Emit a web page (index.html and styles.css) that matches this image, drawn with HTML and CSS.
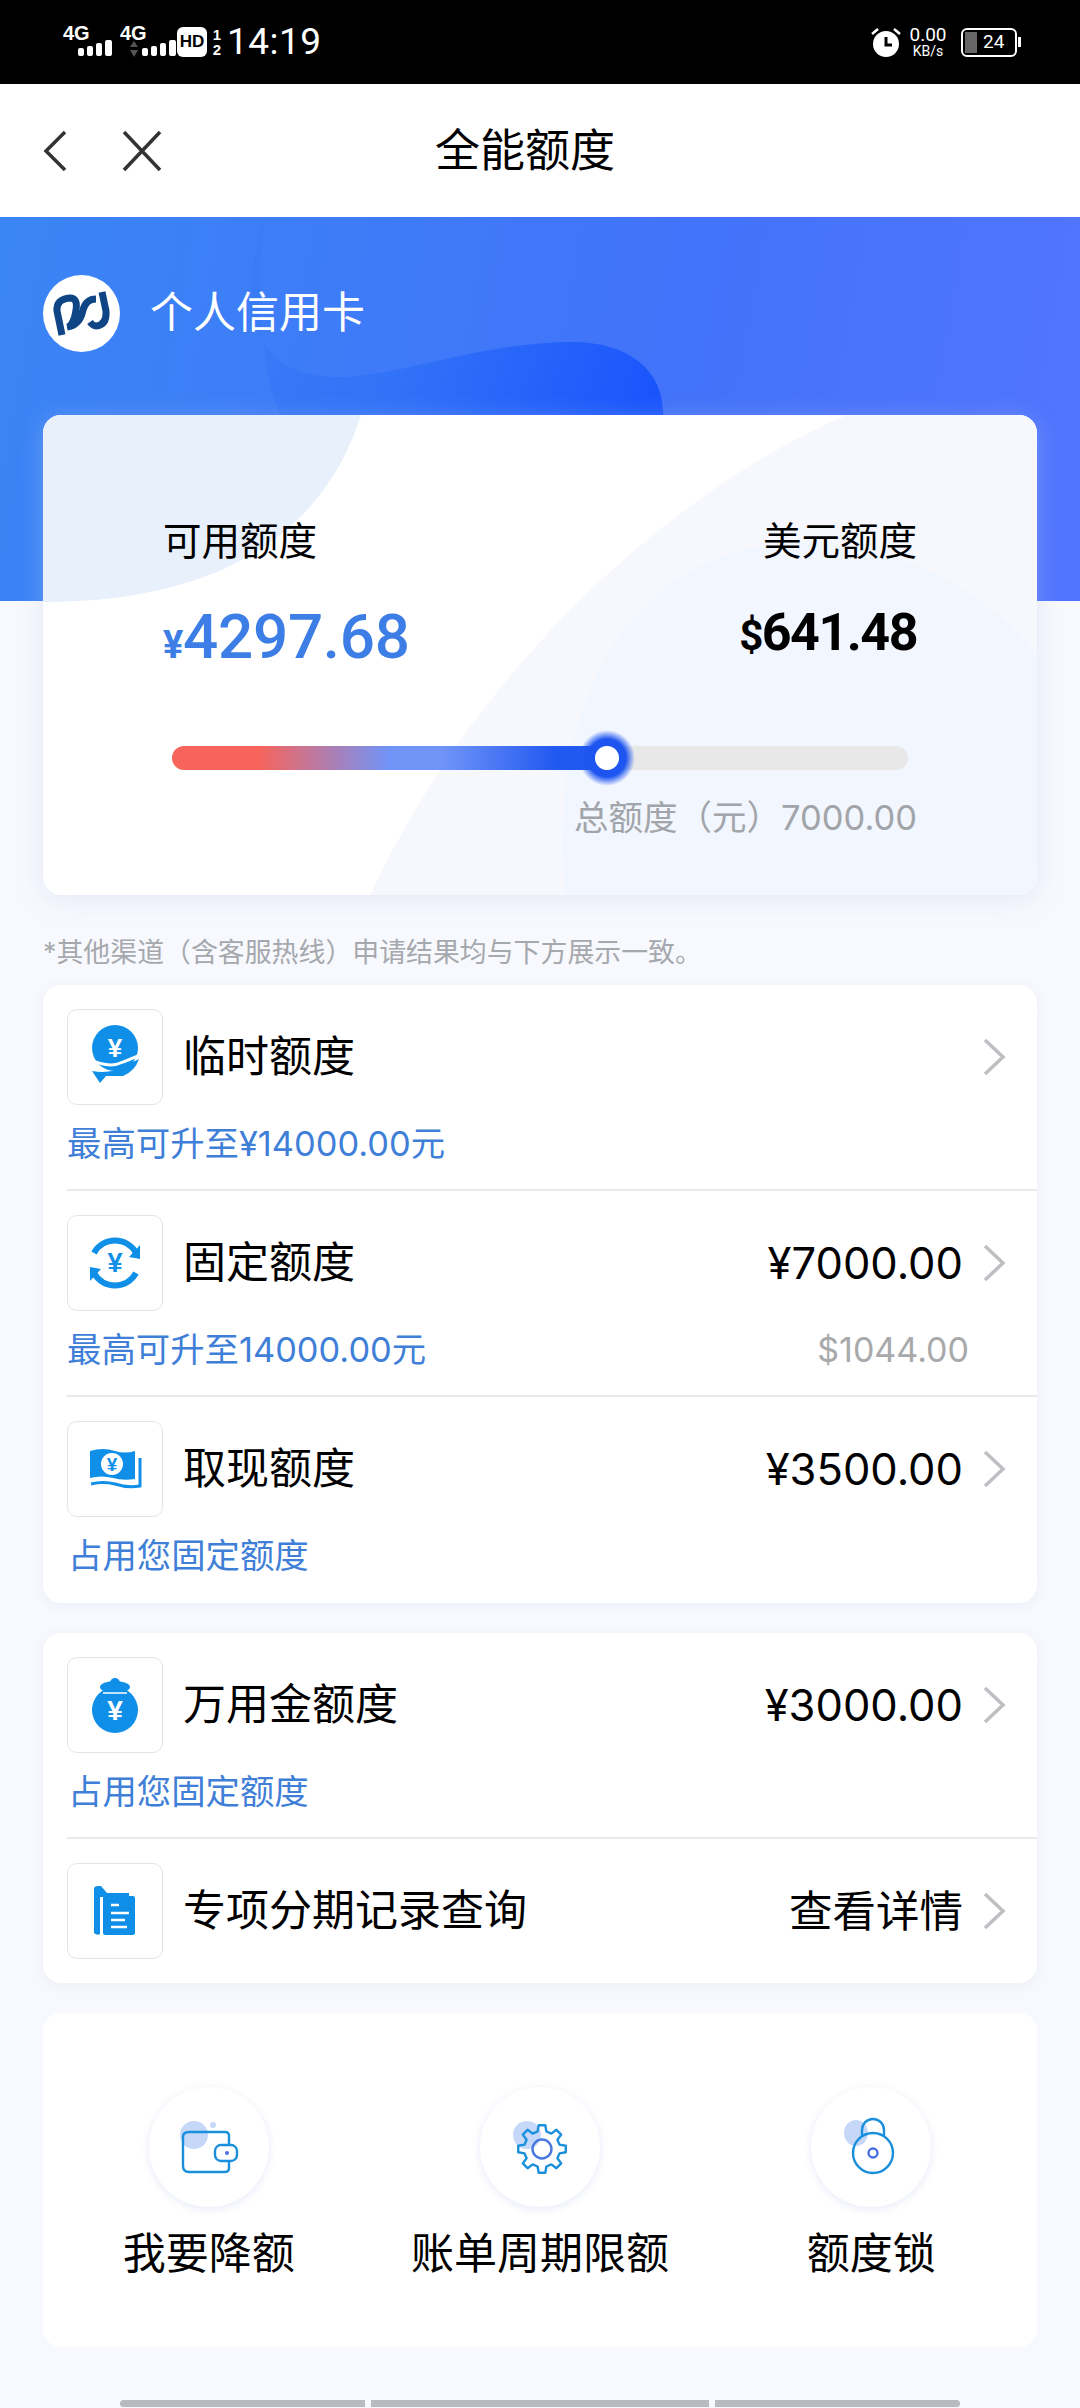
FILE: index.html
```html
<!DOCTYPE html>
<html>
<head>
  <title>全能额度</title>
  <link rel="stylesheet" href="styles.css">
</head>
<body>
<div class="phone">

  <!-- status bar -->
  <div class="status-bar">
    <div class="status-left">
      <div class="signal">
        <span class="net">4G</span>
        <svg width="36" height="17" viewBox="0 0 36 17"><rect x="1" y="8" width="6" height="8" rx="2"/><rect x="10" y="6" width="6" height="10" rx="2"/><rect x="19" y="3" width="6" height="13" rx="2"/><rect x="28" y="0" width="7" height="16" rx="2"/></svg>
      </div>
      <div class="signal signal-two">
        <span class="net">4G</span>
        <svg width="48" height="17" viewBox="0 0 48 17"><path class="dim" d="M5 1l4 6H1zM5 17l4-7H1z"/><rect x="13" y="8" width="6" height="8" rx="2"/><rect x="22" y="6" width="6" height="10" rx="2"/><rect x="31" y="3" width="6" height="13" rx="2"/><rect x="40" y="0" width="7" height="16" rx="2"/></svg>
      </div>
      <span class="hd">HD</span>
      <span class="sim"><span>1</span><span>2</span></span>
      <span class="clock">14:19</span>
    </div>
    <div class="status-right">
      <svg class="alarm" width="30" height="30" viewBox="0 0 30 30"><circle cx="15" cy="17" r="13" fill="#fff"/><path d="M15 10v8h6" fill="none" stroke="#000" stroke-width="3"/><path d="M1 7l6-5M29 7l-6-5" stroke="#fff" stroke-width="2.5" fill="none"/></svg>
      <div class="speed"><span class="speed-num">0.00</span><span class="speed-unit">KB/s</span></div>
      <div class="battery"><span class="battery-level"></span><span class="battery-num">24</span></div>
      <span class="battery-nib"></span>
    </div>
  </div>

  <!-- nav -->
  <div class="nav">
    <svg class="nav-back" width="24" height="42" viewBox="0 0 24 42"><path d="M22 2L3 21l19 19" fill="none" stroke="#333" stroke-width="3.5"/></svg>
    <svg class="nav-close" width="40" height="42" viewBox="0 0 40 42"><path d="M2 2l36 38M38 2L2 40" fill="none" stroke="#333" stroke-width="3.5"/></svg>
    <h1 class="nav-title">全能额度</h1>
  </div>

  <!-- blue header -->
  <div class="hero">
    <svg class="hero-blob" width="1080" height="384" viewBox="0 0 1080 384">
      <defs>
        <linearGradient id="blob" x1="250" y1="40" x2="650" y2="190" gradientUnits="userSpaceOnUse">
          <stop offset="0" stop-color="#3a7cf6"/>
          <stop offset="0.45" stop-color="#3171f8"/>
          <stop offset="1" stop-color="#1a55fc"/>
        </linearGradient>
      </defs>
      <path d="M265 0C243 60 235 160 337 160C400 160 480 125 572 125C640 125 672 165 661 215H300C270 215 250 100 265 0Z" fill="url(#blob)"/>
    </svg>
    <div class="card-brand">
      <svg class="brand-logo" width="77" height="77" viewBox="0 0 77 77">
        <circle cx="38.5" cy="38.5" r="38.5" fill="#fff"/>
        <g fill="none" stroke="#0f4585" stroke-width="7">
          <path d="M19 60L14 36Q13 24 27 23Q35 23 33 35Q32 44 28 50"/>
          <path d="M53 24Q43 24 40 35Q37 50 24 52"/>
          <path d="M47 47Q50 51 53 51Q64 50 63 36L59 17"/>
        </g>
      </svg>
      <span class="brand-name">个人信用卡</span>
    </div>
  </div>

  <div class="content">

    <!-- limit summary -->
    <div class="limit-card">
      <svg class="limit-bg" width="994" height="480" viewBox="0 0 994 480">
        <path d="M804 0C640 70 440 240 327 480H994V0Z" fill="#f6f8fe"/>
        <path d="M522 480C505 330 560 130 760 128C860 128 950 180 994 240V480Z" fill="#f2f6fe"/>
        <path d="M0 0H318C290 90 210 187 0 187Z" fill="#e8f0fc"/>
      </svg>
      <div class="limit-top">
        <div class="limit-col">
          <span class="limit-label">可用额度</span>
          <span class="limit-cny"><span class="cny-sign">¥</span>4297.68</span>
        </div>
        <div class="limit-col limit-col-right">
          <span class="limit-label">美元额度</span>
          <span class="limit-usd"><span class="usd-sign">$</span>641.48</span>
        </div>
      </div>
      <div class="slider">
        <div class="slider-fill" style="width: 59.2%"></div>
        <span class="slider-knob"></span>
      </div>
      <div class="limit-total">总额度（元）7000.00</div>
    </div>

    <p class="note">*其他渠道（含客服热线）申请结果均与下方展示一致。</p>

    <!-- limit types -->
    <div class="list-card">
      <div class="row">
        <div class="row-main">
          <span class="icon-box">
            <svg width="96" height="96" viewBox="0 0 96 96">
              <circle cx="48" cy="39" r="23" fill="#0f8fe8"/>
              <path d="M22 50Q42 60 56 53L76 45" fill="none" stroke="#fff" stroke-width="3"/>
              <path d="M25 62Q44 65 56 58L72 50Q68 62 56 67H39L33 74Z" fill="#0f8fe8"/>
              <text class="yen" x="48" y="48" font-size="26">¥</text>
            </svg>
          </span>
          <span class="row-title">临时额度</span>
          <svg class="chevron" width="23" height="38" viewBox="0 0 23 38"><path d="M2 2l18 17L2 36" fill="none" stroke="#bdbfc3" stroke-width="3.5"/></svg>
        </div>
        <div class="row-sub"><span class="sub-text">最高可升至¥14000.00元</span></div>
      </div>

      <div class="row">
        <div class="row-main">
          <span class="icon-box">
            <svg width="96" height="96" viewBox="0 0 96 96">
              <path d="M27 38A24 24 0 0 1 69 38" fill="none" stroke="#0f8fe8" stroke-width="6"/>
              <path d="M69 58A24 24 0 0 1 27 58" fill="none" stroke="#0f8fe8" stroke-width="6"/>
              <path d="M62 42L73 30V44ZM34 54L23 66V52Z" fill="#0f8fe8"/>
              <text class="yen yen-blue" x="48" y="57" font-size="27">¥</text>
            </svg>
          </span>
          <span class="row-title">固定额度</span>
          <span class="row-amount">¥7000.00</span>
          <svg class="chevron" width="23" height="38" viewBox="0 0 23 38"><path d="M2 2l18 17L2 36" fill="none" stroke="#bdbfc3" stroke-width="3.5"/></svg>
        </div>
        <div class="row-sub"><span class="sub-text">最高可升至14000.00元</span><span class="sub-usd">$1044.00</span></div>
      </div>

      <div class="row row-last">
        <div class="row-main">
          <span class="icon-box">
            <svg width="96" height="96" viewBox="0 0 96 96">
              <path d="M23 30Q36 26 48 30Q58 33 68 30V58Q56 60 46 57Q34 54 23 57Z" fill="#0f8fe8"/>
              <circle cx="45" cy="43" r="11" fill="#fff"/>
              <path d="M73 37V65Q60 67 48 63Q36 60 24 63" fill="none" stroke="#0f8fe8" stroke-width="3"/>
              <text class="yen yen-blue" x="45" y="50" font-size="19">¥</text>
            </svg>
          </span>
          <span class="row-title">取现额度</span>
          <span class="row-amount">¥3500.00</span>
          <svg class="chevron" width="23" height="38" viewBox="0 0 23 38"><path d="M2 2l18 17L2 36" fill="none" stroke="#bdbfc3" stroke-width="3.5"/></svg>
        </div>
        <div class="row-sub"><span class="sub-text sub-inset">占用您固定额度</span></div>
      </div>
    </div>

    <div class="list-card">
      <div class="row">
        <div class="row-main">
          <span class="icon-box">
            <svg width="96" height="96" viewBox="0 0 96 96">
              <circle cx="48" cy="53" r="23" fill="#0f8fe8"/>
              <ellipse cx="48" cy="30" rx="15" ry="6" fill="#0f8fe8"/>
              <circle cx="48" cy="26" r="5" fill="#0f8fe8"/>
              <path d="M36 36H60" stroke="#fff" stroke-width="1.5"/>
              <text class="yen" x="48" y="63" font-size="28">¥</text>
            </svg>
          </span>
          <span class="row-title">万用金额度</span>
          <span class="row-amount">¥3000.00</span>
          <svg class="chevron" width="23" height="38" viewBox="0 0 23 38"><path d="M2 2l18 17L2 36" fill="none" stroke="#bdbfc3" stroke-width="3.5"/></svg>
        </div>
        <div class="row-sub"><span class="sub-text sub-inset">占用您固定额度</span></div>
      </div>

      <div class="row row-last row-plain">
        <div class="row-main">
          <span class="icon-box">
            <svg width="96" height="96" viewBox="0 0 96 96">
              <path d="M27 26Q27 23 31 23H34L40 30H62V34H33V71Q30 73 27 70Z" fill="#0f8fe8"/>
              <rect x="36" y="33" width="32" height="39" rx="2" fill="#0f8fe8"/>
              <path d="M44 42H52M44 50H62M44 57H58M44 64H60" stroke="#fff" stroke-width="2.6" fill="none"/>
            </svg>
          </span>
          <span class="row-title">专项分期记录查询</span>
          <span class="row-amount row-link">查看详情</span>
          <svg class="chevron" width="23" height="38" viewBox="0 0 23 38"><path d="M2 2l18 17L2 36" fill="none" stroke="#bdbfc3" stroke-width="3.5"/></svg>
        </div>
      </div>
    </div>

    <!-- actions -->
    <div class="actions">
      <div class="action">
        <span class="action-circle">
          <svg width="120" height="120" viewBox="0 0 120 120">
            <circle cx="45" cy="48" r="14" fill="#c5d8f8"/>
            <circle cx="64" cy="38" r="3" fill="#c5d8f8"/>
            <path d="M40 45H76Q80 45 80 49V81Q80 85 76 85H40Q34 85 34 79V50Q34 45 40 45Z" fill="none" stroke="#1a90dc" stroke-width="2.4"/>
            <rect x="66" y="58" width="22" height="16" rx="6" fill="#fff" stroke="#1a90dc" stroke-width="2.4"/>
            <circle cx="78" cy="66" r="2" fill="#4a70e0"/>
          </svg>
        </span>
        <span class="action-label">我要降额</span>
      </div>
      <div class="action">
        <span class="action-circle">
          <svg width="120" height="120" viewBox="0 0 120 120">
            <circle cx="47" cy="48" r="14" fill="#c5d8f8"/>
            <polygon transform="translate(62,62)" fill="none" stroke="#1a90dc" stroke-width="2.4" stroke-linejoin="round" points="17.5,-4.4 23.8,-3.3 23.8,3.3 17.5,4.4 15.4,9.3 19.2,14.4 14.4,19.2 9.3,15.4 4.4,17.5 3.3,23.8 -3.3,23.8 -4.4,17.5 -9.3,15.4 -14.4,19.2 -19.2,14.4 -15.4,9.3 -17.5,4.4 -23.8,3.3 -23.8,-3.3 -17.5,-4.4 -15.4,-9.3 -19.2,-14.4 -14.4,-19.2 -9.3,-15.4 -4.4,-17.5 -3.3,-23.8 3.3,-23.8 4.4,-17.5 9.3,-15.4 14.4,-19.2 19.2,-14.4 15.4,-9.3"/>
            <circle cx="62" cy="62" r="9.5" fill="none" stroke="#4a78e0" stroke-width="2.4"/>
          </svg>
        </span>
        <span class="action-label">账单周期限额</span>
      </div>
      <div class="action">
        <span class="action-circle">
          <svg width="120" height="120" viewBox="0 0 120 120">
            <ellipse cx="45" cy="46" rx="12" ry="13" fill="#c5d8f8"/>
            <path d="M51 49V43A11 11 0 0 1 73 43V49" fill="none" stroke="#1a90dc" stroke-width="2.4"/>
            <circle cx="62" cy="66" r="20" fill="none" stroke="#1a90dc" stroke-width="2.4"/>
            <circle cx="62" cy="66" r="4.5" fill="none" stroke="#4a70e0" stroke-width="2.4"/>
          </svg>
        </span>
        <span class="action-label">额度锁</span>
      </div>
    </div>

    <div class="scrollbar">
      <span class="scroll-seg seg-a"></span>
      <span class="scroll-seg seg-b"></span>
      <span class="scroll-seg seg-c"></span>
    </div>
  </div>
</div>
</body>
</html>
```

FILE: styles.css
```css
* { box-sizing: border-box; }

html, body {
  margin: 0;
  padding: 0;
}

body {
  font-family: Inter, "Noto Sans CJK SC", sans-serif;
  text-spacing-trim: space-all;
  color: #000;
  background: #f8f9fe;
}

.phone {
  width: 1080px;
  height: 2408px;
  overflow: hidden;
  background: #f8f9fe;
}

/* status bar */
.status-bar {
  height: 84px;
  background: #000;
  color: #fff;
  display: flex;
  justify-content: space-between;
  align-items: center;
  padding: 0 59px 0 63px;
}
.status-left, .status-right {
  display: flex;
  align-items: center;
}
.signal {
  width: 50px;
  height: 30px;
  position: relative;
  margin-right: 7px;
}
.signal-two { width: 57px; margin-right: 0; }
.signal svg {
  position: absolute;
  right: 0;
  bottom: 0;
  fill: #fff;
}
.signal .dim { fill: #555; }
.net {
  position: absolute;
  left: 0;
  top: -4px;
  font: bold 20px/20px "Liberation Sans", sans-serif;
}
.hd {
  width: 30px;
  height: 30px;
  border-radius: 6px;
  background: #fff;
  color: #000;
  font: bold 17px/30px "Liberation Sans", sans-serif;
  text-align: center;
}
.sim {
  display: flex;
  flex-direction: column;
  width: 14px;
  margin: 0 3px 0 3px;
  font: bold 15px/15px "Liberation Sans", sans-serif;
  text-align: center;
}
.clock {
  font: 37px/40px Roboto, sans-serif;
  letter-spacing: 0.5px;
}
.alarm { margin-right: 6px; }
.speed {
  display: flex;
  flex-direction: column;
  width: 42px;
  margin-right: 12px;
  font-family: Roboto, sans-serif;
  text-align: center;
}
.speed-num { font-size: 19px; line-height: 18px; }
.speed-unit { font-size: 14px; line-height: 15px; }
.battery {
  width: 56px;
  height: 29px;
  border: 2.5px solid #fff;
  border-radius: 6px;
  display: flex;
  align-items: center;
  padding: 2px;
}
.battery-level {
  width: 12px;
  height: 100%;
  background: #666;
}
.battery-num {
  margin-left: 6px;
  font: 19px/20px Roboto, sans-serif;
}
.battery-nib {
  width: 3px;
  height: 10px;
  margin-left: 1px;
  background: #fff;
}

/* nav */
.nav {
  height: 133px;
  background: #fff;
  display: flex;
  align-items: center;
  padding-left: 43px;
  position: relative;
}
.nav-close { margin-left: 55px; }
.nav-title {
  position: absolute;
  left: 0;
  right: 0;
  margin: 0;
  padding-right: 30px;
  text-align: center;
  font-size: 45px;
  font-weight: 400;
  line-height: 60px;
}

/* blue header */
.hero {
  height: 384px;
  position: relative;
  background: linear-gradient(100deg, #3a85f5 0%, #4273fa 60%, #5275fe 100%);
}
.hero-blob {
  position: absolute;
  left: 0;
  top: 0;
}
.card-brand {
  position: relative;
  display: flex;
  align-items: center;
  padding: 58px 0 0 43px;
}
.brand-name {
  margin: 0 0 4px 30px;
  color: #fff;
  font-size: 43px;
  line-height: 60px;
}

.content {
  padding: 0 43px;
}

/* limit summary */
.limit-card {
  position: relative;
  height: 480px;
  margin-top: -186px;
  padding: 100px 120px 0;
  overflow: hidden;
  border-radius: 18px;
  background: #fff;
  box-shadow: 0 4px 24px rgba(190, 200, 235, 0.35);
}
.limit-bg {
  position: absolute;
  left: 0;
  top: 0;
}
.limit-top {
  position: relative;
  display: flex;
  justify-content: space-between;
}
.limit-col {
  display: flex;
  flex-direction: column;
}
.limit-col-right { align-items: flex-end; }
.limit-label {
  font-size: 38.5px;
  line-height: 52px;
}
.limit-cny {
  margin-top: 30px;
  color: #3d7ee6;
  font: 500 62px/80px Roboto, sans-serif;
  letter-spacing: -0.3px;
}
.cny-sign { font-size: 38px; font-weight: 700; }
.limit-usd {
  margin-top: 26px;
  font: 700 52px/80px Roboto, sans-serif;
  letter-spacing: -1.5px;
}
.usd-sign { font-size: 42px; }
.slider {
  position: relative;
  height: 24px;
  margin: 61px 9px 0;
  border-radius: 12px;
  background: #e8e8e8;
}
.slider-fill {
  height: 100%;
  border-radius: 12px 0 0 12px;
  background: linear-gradient(90deg, #f7645c 0%, #f7645c 20%, #7094f8 50%, #7094f8 62%, #2158f0 88%, #2158f0 100%);
}
.slider-knob {
  position: absolute;
  left: 407px;
  top: -16px;
  width: 56px;
  height: 56px;
  border-radius: 50%;
  background: radial-gradient(circle, #fff 0, #fff 11.5px, #1e55f0 12.5px, #1e55f0 19px, rgba(30, 85, 240, 0) 28px);
}
.limit-total {
  position: relative;
  margin-top: 24px;
  text-align: right;
  color: #a1a4a9;
  font-size: 34.5px;
  line-height: 48px;
}

.note {
  margin: 39px 0 15px;
  color: #a5a8ad;
  font-size: 26.9px;
  line-height: 36px;
}

/* list cards */
.list-card {
  margin-bottom: 30px;
  padding-left: 24px;
  border-radius: 18px;
  background: #fff;
  box-shadow: 0 2px 12px rgba(210, 216, 235, 0.3);
}
.row {
  height: 206px;
  padding: 24px 0 0;
  border-bottom: 2px solid #e9e9ec;
}
.row-last { border-bottom: 0; }
.row-plain { height: 144px; }
.row-main {
  display: flex;
  align-items: center;
  height: 96px;
  padding-right: 31px;
}
.icon-box {
  width: 96px;
  height: 96px;
  flex: none;
  border: 1px solid #e4e4e6;
  border-radius: 10px;
  background: #fff;
  overflow: hidden;
}
.icon-box svg { display: block; margin: -1px; }
.yen {
  fill: #fff;
  font-family: "Liberation Sans", sans-serif;
  font-weight: bold;
  text-anchor: middle;
}
.yen-blue { fill: #0f8fe8; }
.row-title {
  flex: 1;
  margin: 0 0 3px 20px;
  font-size: 43px;
  line-height: 60px;
}
.row-amount {
  margin: 0 20px 0 0;
  font-size: 43.5px;
  line-height: 60px;
}
.row-sub {
  display: flex;
  justify-content: space-between;
  align-items: center;
  height: 80px;
  padding: 0 68px 3px 0;
}
.sub-text {
  color: #3f7fd8;
  font-size: 34.4px;
  line-height: 48px;
}
.sub-inset { margin-left: 1px; }
.sub-usd {
  color: #a8a9ab;
  font-size: 34px;
  line-height: 48px;
}

/* actions */
.actions {
  height: 334px;
  padding-top: 74px;
  display: flex;
  border-radius: 18px;
  background: #fff;
}
.action {
  position: relative;
  flex: 1;
  display: flex;
  flex-direction: column;
  align-items: center;
  gap: 16px;
}
.action-circle {
  width: 120px;
  height: 120px;
  border-radius: 50%;
  background: #fff;
  box-shadow: 0 2px 8px rgba(215, 220, 245, 0.6);
}
.action-circle svg { display: block; }
.action-label {
  font-size: 43px;
  line-height: 60px;
  white-space: nowrap;
}

/* page indicator */
.scrollbar {
  display: flex;
  gap: 6px;
  margin: 53px 0 0 77px;
}
.scroll-seg {
  height: 7px;
  background: #b8babf;
}
.seg-a { width: 245px; border-radius: 4px 0 0 4px; }
.seg-b { width: 338px; }
.seg-c { width: 245px; border-radius: 0 4px 4px 0; }
```
